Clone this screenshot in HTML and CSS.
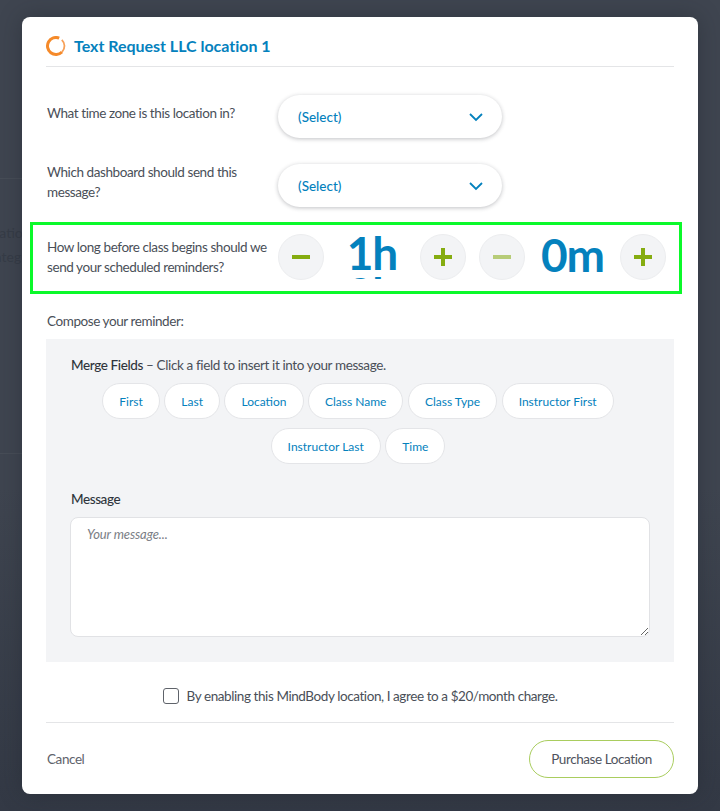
FILE: index.html
```html
<!DOCTYPE html>
<html lang="en">
<head>
<meta charset="utf-8">
<title>Text Request LLC location 1</title>
<link rel="stylesheet" href="styles.css">
</head>
<body>
<div class="backdrop">
  <div class="bg-line bg-line-a"></div>
  <div class="bg-line bg-line-b"></div>
  <div class="bg-text bg-text-a">Location</div>
  <div class="bg-text bg-text-b">Integrate</div>
</div>
<main class="modal">
  <header class="modal-head">
    <svg class="logo" width="20" height="20" viewBox="0 0 20 20"><path d="M13.2 2.1A8.5 8.5 0 1 0 16 16" fill="none" stroke="#f58a2a" stroke-width="3"/><path d="M16 16A8.5 8.5 0 0 0 15.8 3.8" fill="none" stroke="#f7a058" stroke-width="1.8"/></svg>
    <h1 class="modal-title">Text Request LLC location 1</h1>
  </header>
  <div class="field-row row-zone">
    <div class="field-label label-top">What time zone is this location in?</div>
    <button class="select"><span>(Select)</span><svg width="16" height="10" viewBox="0 0 16 10"><path d="M2 2l6 6 6-6" fill="none" stroke="#0481bd" stroke-width="1.8"/></svg></button>
  </div>
  <div class="field-row row-dash">
    <div class="field-label label-dash">Which dashboard should send this message?</div>
    <button class="select select-dash"><span>(Select)</span><svg width="16" height="10" viewBox="0 0 16 10"><path d="M2 2l6 6 6-6" fill="none" stroke="#0481bd" stroke-width="1.8"/></svg></button>
  </div>
  <section class="timing">
    <div class="field-label timing-label">How long before class begins should we send your scheduled reminders?</div>
    <div class="stepper-group">
      <button class="step"><span class="sign sign-minus"></span></button>
      <div class="value value-h"><div class="num">1h</div><div class="num num-next">2h</div></div>
      <button class="step step-gap"><span class="sign sign-plus"></span></button>
      <button class="step"><span class="sign sign-minus sign-off"></span></button>
      <div class="value value-m"><div class="num num-m">0m</div></div>
      <button class="step"><span class="sign sign-plus"></span></button>
    </div>
  </section>
  <p class="compose">Compose your reminder:</p>
  <section class="panel">
    <p class="merge-intro"><span class="merge-strong">Merge Fields</span> – Click a field to insert it into your message.</p>
    <div class="chips">
      <button class="chip">First</button>
      <button class="chip">Last</button>
      <button class="chip">Location</button>
      <button class="chip">Class Name</button>
      <button class="chip">Class Type</button>
      <button class="chip">Instructor First</button>
      <button class="chip">Instructor Last</button>
      <button class="chip">Time</button>
    </div>
    <label class="msg-label" for="msg">Message</label>
    <textarea class="msg" id="msg" placeholder="Your message..."></textarea>
  </section>
  <label class="agree"><input class="agree-box" type="checkbox"><span>By enabling this MindBody location, I agree to a $20/month charge.</span></label>
  <footer class="modal-foot">
    <a class="cancel">Cancel</a>
    <button class="purchase">Purchase Location</button>
  </footer>
</main>
</body>
</html>
```
FILE: styles.css
```css
* { box-sizing: border-box; }
html, body { margin: 0; height: 811px; overflow: hidden; }
body {
  background: linear-gradient(#3f4550, #3f4550 60%, #333945);
  font-family: Lato, sans-serif;
  color: #4a4f58;
  font-size: 13.5px;
  letter-spacing: -0.42px;
  padding: 17px 22px;
}
button, textarea { font-family: inherit; }
.backdrop { position: absolute; inset: 0; overflow: hidden; }
.bg-line { position: absolute; left: 0; width: 22px; height: 1px; background: #474d57; }
.bg-line-a { top: 178px; }
.bg-line-b { top: 453px; }
.bg-text { position: absolute; font-size: 14px; color: #363c47; white-space: nowrap; letter-spacing: 0; left: -22px; }
.bg-text-a { top: 224px; }
.bg-text-b { top: 248px; left: -10px; }
.modal {
  position: relative;
  width: 676px;
  height: 777px;
  background: #fff;
  border-radius: 8px;
  box-shadow: 0 0 22px rgba(30, 34, 42, .4);
  padding: 0 24px;
}
.modal-head {
  display: flex;
  align-items: center;
  gap: 8px;
  height: 50px;
  padding-top: 8px;
  border-bottom: 1px solid #e4e5e7;
}
.logo { flex: none; margin-top: 1px; }
.modal-title { margin: 0; font-size: 16px; font-weight: 700; color: #0481bd; letter-spacing: -0.02px; }
.field-row { display: flex; }
.field-label { width: 232px; flex: none; line-height: 20px; color: #4a4f58; padding-left: 1px; }
.row-zone { padding-top: 28px; height: 98px; }
.label-top { padding-top: 8px; }
.row-dash { height: 57px; }
.label-dash { margin-top: -3px; padding-right: 20px; }
.select {
  width: 224px;
  height: 43px;
  border: 0;
  border-radius: 22px;
  background: #fff;
  box-shadow: 0 1px 4px rgba(30, 34, 42, .28);
  display: flex;
  align-items: center;
  justify-content: space-between;
  padding: 0 18px 0 20px;
  color: #0481bd;
  font-size: 13.5px;
  font-weight: 500;
  letter-spacing: 0;
}
.select-dash { margin-top: -1px; }
.timing {
  margin: 0 -8px 0 -16px;
  height: 72px;
  border: 3px solid #0bf92a;
  display: flex;
  align-items: center;
  padding: 0 0 3px 14px;
}
.timing-label { width: 231px; padding-left: 0; }
.stepper-group { display: flex; align-items: center; }
.step {
  width: 46px;
  height: 46px;
  flex: none;
  border: 1px solid #ecedef;
  border-radius: 50%;
  background: #f3f4f6;
  display: flex;
  align-items: center;
  justify-content: center;
  padding: 0;
}
.sign { position: relative; display: block; width: 18px; height: 4px; background: #85ac10; }
.sign-plus::after {
  content: "";
  position: absolute;
  left: 7px;
  top: -7px;
  width: 4px;
  height: 18px;
  background: #85ac10;
}
.sign-off { opacity: .55; }
.step-gap { margin-right: 13px; }
.value { height: 45px; overflow: hidden; text-align: center; color: #0481bd; font-weight: 700; letter-spacing: -1px; }
.value-h { width: 96px; }
.value-m { width: 95px; }
.num { font-size: 46px; line-height: 38px; height: 46px; }
.num-m { line-height: 42px; }
.num-next { margin-top: -5px; }
.compose { margin: 17px 0 0; line-height: 20px; padding-left: 1px; }
.panel {
  margin-top: 8px;
  height: 323px;
  background: #f3f4f6;
  padding: 16px 24px 0;
}
.merge-intro { margin: 0; line-height: 20px; color: #4a4f58; padding-left: 1px; letter-spacing: -0.38px; }
.merge-strong { color: #2f343c; font-weight: 500; }
.chips {
  display: flex;
  flex-wrap: wrap;
  justify-content: center;
  gap: 9px 4.5px;
  margin-top: 8px;
  padding-right: 4px;
}
.chip {
  height: 36px;
  border: 1px solid #e4e5e8;
  border-radius: 18px;
  background: #fff;
  color: #0481bd;
  font-size: 12px;
  letter-spacing: 0;
  padding: 0 16px;
}
.msg-label { display: block; margin-top: 25px; line-height: 20px; color: #2f343c; font-weight: 500; padding-left: 1px; }
.msg {
  display: block;
  width: 580px;
  height: 120px;
  margin-top: 8px;
  border: 1px solid #e1e2e5;
  border-radius: 8px;
  padding: 8px 16px;
  font-size: 13px;
  letter-spacing: -0.1px;
  outline: none;
}
.msg::placeholder { font-style: italic; color: #7a7e85; opacity: 1; }
.agree {
  display: flex;
  align-items: center;
  justify-content: center;
  gap: 8px;
  height: 61px;
  padding-top: 8px;
  border-bottom: 1px solid #e4e5e7;
}
.agree-box {
  appearance: none;
  width: 16px;
  height: 16px;
  margin: 0;
  border: 1px solid #5f636a;
  border-radius: 3px;
  background: #fff;
}
.modal-foot {
  display: flex;
  align-items: center;
  justify-content: space-between;
  height: 71px;
}
.cancel { color: #5f636c; padding-left: 1px; }
.purchase {
  width: 145px;
  height: 38px;
  border: 1px solid #a9cd5e;
  border-radius: 20px;
  background: #fff;
  color: #4f535d;
  font-size: 13.5px;
  letter-spacing: -0.42px;
  padding: 0;
}
```
